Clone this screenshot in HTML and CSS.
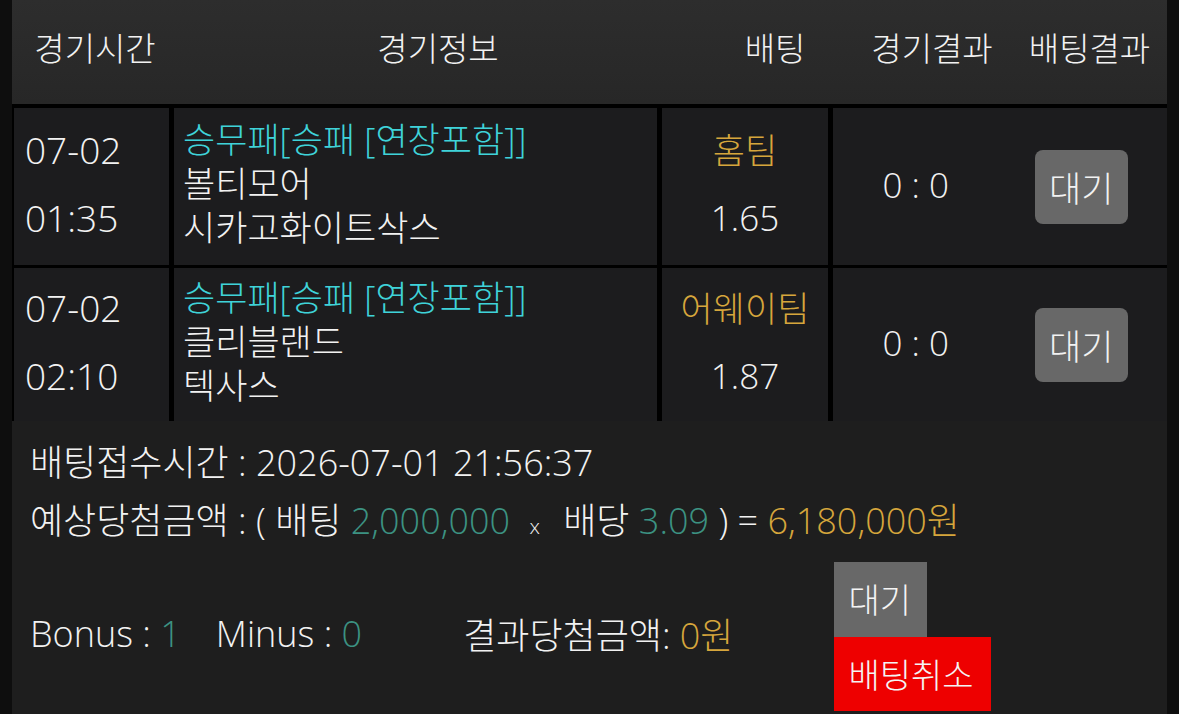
FILE: index.html
```html
<!DOCTYPE html>
<html lang="ko">
<head>
<meta charset="utf-8">
<title>배팅내역</title>
<link rel="stylesheet" href="styles.css">
</head>
<body>
<div class="board">
  <div class="thead">
    <div class="th">경기시간</div>
    <div class="th">경기정보</div>
    <div class="th">배팅</div>
    <div class="th">경기결과</div>
    <div class="th">배팅결과</div>
  </div>

  <div class="tbody">
    <div class="cell time"><span>07-02</span><span>01:35</span></div>
    <div class="cell info">
      <span class="market">승무패[승패 [연장포함]]</span>
      <span>볼티모어</span>
      <span>시카고화이트삭스</span>
    </div>
    <div class="cell pick"><span class="side">홈팀</span><span>1.65</span></div>
    <div class="cell result">
      <div class="score">0 : 0</div>
      <div class="state"><span class="badge">대기</span></div>
    </div>

    <div class="cell time"><span>07-02</span><span>02:10</span></div>
    <div class="cell info">
      <span class="market">승무패[승패 [연장포함]]</span>
      <span>클리블랜드</span>
      <span>텍사스</span>
    </div>
    <div class="cell pick"><span class="side">어웨이팀</span><span>1.87</span></div>
    <div class="cell result">
      <div class="score">0 : 0</div>
      <div class="state"><span class="badge">대기</span></div>
    </div>
  </div>

  <div class="summary">
    <p class="line">배팅접수시간 : 2026-07-01 21:56:37</p>
    <p class="line">예상당첨금액 : ( 배팅 <span class="num">2,000,000</span> <span class="times">x</span> 배당 <span class="num">3.09</span> ) = <span class="gold">6,180,000원</span></p>
    <div class="footer-row">
      <span class="stat">Bonus : <span class="num">1</span></span>
      <span class="stat minus">Minus : <span class="num">0</span></span>
      <span class="stat payout">결과당첨금액: <span class="gold">0원</span></span>
      <div class="actions">
        <span class="btn wait">대기</span>
        <span class="btn cancel">배팅취소</span>
      </div>
    </div>
  </div>
</div>
</body>
</html>
```

FILE: styles.css
```css
* {
  box-sizing: border-box;
}

html,
body {
  margin: 0;
  padding: 0;
  background: #0e0e0e;
}

body {
  font-family: "Open Sans", "Noto Sans CJK KR", sans-serif;
  font-weight: 300;
  font-size: 35px;
  color: #f2f2f2;
  width: 1179px;
  height: 714px;
  overflow: hidden;
}

.board {
  margin: 0 12px;
  height: 714px;
  background: #1e1e1e;
}

/* header bar */
.thead {
  display: grid;
  grid-template-columns: 166px 520px 154px 160px 155px;
  height: 108px;
  padding-bottom: 10px;
  font-size: 33px;
  background: linear-gradient(#2d2d2d, #272727);
  border-bottom: 4px solid #000;
}

.th {
  display: flex;
  align-items: center;
  justify-content: center;
  white-space: nowrap;
}

/* match rows */
.tbody {
  display: grid;
  grid-template-columns: 155px 483px 166px 1fr;
  grid-template-rows: 157px 153px;
  column-gap: 5px;
  row-gap: 3px;
  padding-left: 2px;
  background: #000;
}

.cell {
  background: #1c1c1e;
  display: flex;
  flex-direction: column;
  justify-content: center;
}

.time {
  padding-left: 11px;
  padding-bottom: 6px;
  gap: 34px;
  line-height: 34px;
  font-size: 37px;
}

.info {
  padding-left: 9px;
  line-height: 44px;
  padding-bottom: 6px;
  white-space: nowrap;
}

.market {
  color: #3fd3d9;
}

.pick {
  align-items: center;
  gap: 33px;
  line-height: 34px;
  padding-bottom: 4px;
}

.side {
  color: #d6a63c;
}

.result {
  flex-direction: row;
  align-items: center;
}

.score,
.state {
  flex: 1;
  display: flex;
  justify-content: center;
}

.score {
  padding-bottom: 4px;
}

.state {
  padding-right: 3px;
}

.badge {
  display: flex;
  align-items: center;
  justify-content: center;
  width: 93px;
  height: 74px;
  border-radius: 8px;
  background: #686868;
  white-space: nowrap;
}

/* bet summary */
.summary {
  padding: 13px 0 0 18px;
  font-size: 36px;
}

.line {
  margin: 0;
  line-height: 58px;
  white-space: nowrap;
}

.num {
  color: #3c9282;
}

.gold {
  color: #d6a63c;
}

.times {
  font-size: 21px;
  margin: 0 14px 0 10px;
}

.footer-row {
  display: flex;
  align-items: center;
  margin-top: 7px;
}

.stat {
  white-space: nowrap;
  padding-bottom: 6px;
}

.stat.minus {
  margin-left: 35px;
}

.stat.payout {
  margin-left: 101px;
}

.actions {
  display: flex;
  flex-direction: column;
  align-items: flex-start;
  margin-left: 101px;
  font-size: 34px;
}

.btn {
  display: flex;
  align-items: center;
  padding: 0 0 2px 14px;
  color: #f4f4f4;
  white-space: nowrap;
}

.wait {
  width: 93px;
  height: 75px;
  background: #686868;
}

.cancel {
  width: 157px;
  height: 74px;
  background: #ee0000;
}
```
